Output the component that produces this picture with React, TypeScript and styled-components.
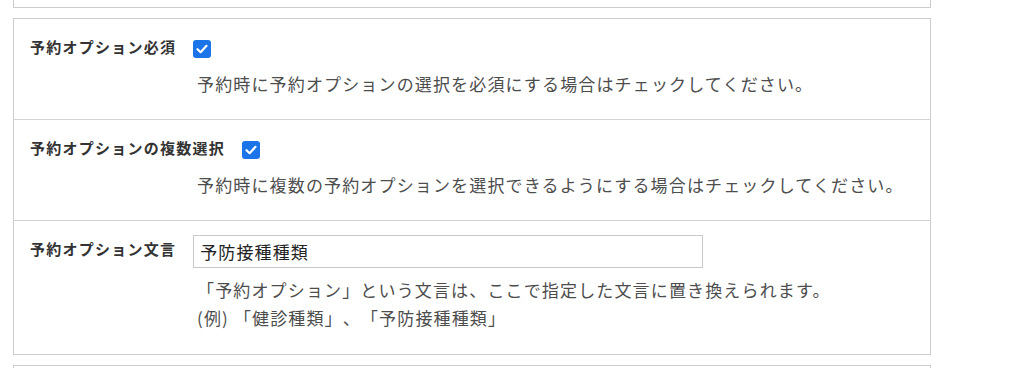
import React from 'react'
import styled, { createGlobalStyle } from 'styled-components'

const GlobalStyle = createGlobalStyle`
  html, body {
    margin: 0;
    padding: 0;
    background: #fff;
  }
  body {
    font-family: "Noto Sans CJK JP", "Noto Sans", sans-serif;
    color: #333;
  }
`

const PageStyle = styled.div`
  width: 918px;
  padding: 0 0 0 13px;
  display: flex;
  flex-direction: column;
  gap: 10px;
`

const PanelStyle = styled.section<{ $height?: number; $cutTop?: boolean; $cutBottom?: boolean }>`
  border: 1px solid #cdcdcd;
  ${({ $cutTop }) => ($cutTop ? 'border-top: none;' : '')}
  ${({ $cutBottom }) => ($cutBottom ? 'border-bottom: none;' : '')}
  ${({ $height }) => ($height !== undefined ? `height: ${$height}px;` : '')}
  background: #fff;
`

const RowStyle = styled.div<{ $bottom: number }>`
  padding: 14px 16px ${({ $bottom }) => $bottom}px 16px;
  & + & {
    border-top: 1px solid #d3d3d3;
  }
`

const HeadStyle = styled.div`
  display: flex;
  align-items: flex-start;
  gap: 17px;
`

const LabelStyle = styled.label`
  margin-top: 4px;
  font-size: 15px;
  line-height: 20px;
  font-weight: 700;
  letter-spacing: 1.25px;
  color: #333;
  white-space: nowrap;
`

const CheckStyle = styled.span`
  margin-top: 7px;
  width: 18px;
  height: 18px;
  border-radius: 3px;
  background: #1b74e8;
  display: flex;
  align-items: center;
  justify-content: center;
`

const InputStyle = styled.input`
  box-sizing: border-box;
  width: 510px;
  height: 33px;
  margin: 0;
  padding: 0 6px;
  border: 1px solid #c9c9c9;
  border-radius: 0;
  font-family: "Noto Sans CJK JP", sans-serif;
  font-size: 17px;
  letter-spacing: 1.1px;
  color: #222;
  outline: none;
`

const DescriptionStyle = styled.div<{ $top: number; $lineHeight: number }>`
  margin-top: ${({ $top }) => $top}px;
  padding-left: 167px;
  font-size: 17px;
  line-height: ${({ $lineHeight }) => $lineHeight}px;
  letter-spacing: 1.15px;
  text-spacing-trim: space-all;
  color: #4d4d4d;
`

const Check: React.FC = () => (
  <CheckStyle>
    <svg width="12" height="10" viewBox="0 0 12 10">
      <path d="M1.5 5.2 L4.6 8.2 L10.5 1.8" fill="none" stroke="#fff" strokeWidth="2.2" strokeLinecap="round" strokeLinejoin="round" />
    </svg>
  </CheckStyle>
)

const App: React.FC = () => {
  return (
    <>
      <GlobalStyle />
      <PageStyle>
        <PanelStyle $height={7} $cutTop />
        <PanelStyle>
          <RowStyle $bottom={26}>
            <HeadStyle>
              <LabelStyle>予約オプション必須</LabelStyle>
              <Check />
            </HeadStyle>
            <DescriptionStyle $top={16} $lineHeight={19}>
              予約時に予約オプションの選択を必須にする場合はチェックしてください。
            </DescriptionStyle>
          </RowStyle>
          <RowStyle $bottom={26}>
            <HeadStyle>
              <LabelStyle>予約オプションの複数選択</LabelStyle>
              <Check />
            </HeadStyle>
            <DescriptionStyle $top={16} $lineHeight={19}>
              予約時に複数の予約オプションを選択できるようにする場合はチェックしてください。
            </DescriptionStyle>
          </RowStyle>
          <RowStyle $bottom={22}>
            <HeadStyle>
              <LabelStyle>予約オプション文言</LabelStyle>
              <InputStyle defaultValue="予防接種種類" />
            </HeadStyle>
            <DescriptionStyle $top={8} $lineHeight={28}>
              「予約オプション」という文言は、ここで指定した文言に置き換えられます。
              <br />
              (例) 「健診種類」、「予防接種種類」
            </DescriptionStyle>
          </RowStyle>
        </PanelStyle>
        <PanelStyle $height={20} $cutBottom />
      </PageStyle>
    </>
  )
}

export default App
